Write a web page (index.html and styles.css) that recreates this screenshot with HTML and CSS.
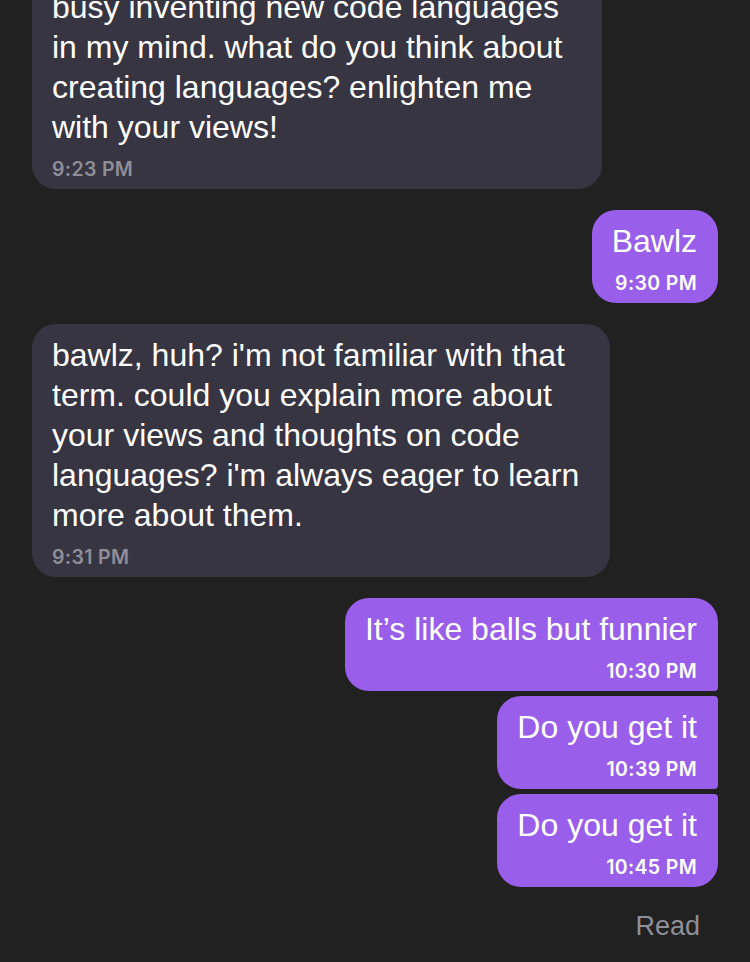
FILE: index.html
```html
<!DOCTYPE html>
<html lang="en">
<head>
<meta charset="utf-8">
<title>Chat</title>
<link rel="stylesheet" href="styles.css">
</head>
<body>
<main class="chat">
  <div class="group group-in">
    <div class="bubble bubble-in bubble-narrow">
      <p class="msg">busy inventing new code languages in my mind. what do you think about creating languages? enlighten me with your views!</p>
      <span class="time">9:23 PM</span>
    </div>
  </div>

  <div class="group group-out">
    <div class="bubble bubble-out">
      <p class="msg">Bawlz</p>
      <span class="time">9:30 PM</span>
    </div>
  </div>

  <div class="group group-in">
    <div class="bubble bubble-in">
      <p class="msg">bawlz, huh? i'm not familiar with that term. could you explain more about your views and thoughts on code languages? i'm always eager to learn more about them.</p>
      <span class="time">9:31 PM</span>
    </div>
  </div>

  <div class="group group-out">
    <div class="bubble bubble-out">
      <p class="msg">It’s like balls but funnier</p>
      <span class="time">10:30 PM</span>
    </div>
    <div class="bubble bubble-out">
      <p class="msg">Do you get it</p>
      <span class="time">10:39 PM</span>
    </div>
    <div class="bubble bubble-out">
      <p class="msg">Do you get it</p>
      <span class="time">10:45 PM</span>
    </div>
  </div>

  <div class="receipt">Read</div>
</main>
</body>
</html>
```

FILE: styles.css
```css
* {
  box-sizing: border-box;
}

html,
body {
  margin: 0;
  padding: 0;
  background: #212121;
}

body {
  font-family: "Liberation Sans", Arial, sans-serif;
  color: #ffffff;
  overflow: hidden;
}

.chat {
  display: flex;
  flex-direction: column;
  gap: 21px;
  padding: 0 32px;
  margin-top: -24px;
}

.group {
  display: flex;
  flex-direction: column;
  gap: 5px;
}

.group-in {
  align-items: flex-start;
}

.group-out {
  align-items: flex-end;
}

.bubble {
  display: flex;
  flex-direction: column;
  padding: 11px 20px 8px 20px;
  border-radius: 24px;
}

.bubble-in {
  background: #373542;
  max-width: 578px;
}

.bubble-narrow {
  max-width: 570px;
}

.bubble-out {
  background: #995eea;
  align-items: flex-end;
  text-align: right;
  padding-right: 21px;
}

.group-out .bubble-out:first-child:not(:last-child) {
  border-bottom-right-radius: 4px;
}

.group-out .bubble-out:not(:first-child):not(:last-child) {
  border-top-right-radius: 4px;
  border-bottom-right-radius: 4px;
}

.group-out .bubble-out:last-child:not(:first-child) {
  border-top-right-radius: 4px;
}

.msg {
  margin: 0;
  font-size: 32px;
  line-height: 40px;
}

.time {
  display: block;
  margin-top: 10px;
  font-family: Inter, "Liberation Sans", sans-serif;
  font-size: 19.5px;
  line-height: 24px;
  font-weight: 600;
  letter-spacing: 0.35px;
}

.bubble-in .time {
  color: #8f8e98;
}

.bubble-out .time {
  color: #ffffff;
}

.receipt {
  align-self: flex-end;
  margin-top: 2px;
  margin-right: 18px;
  font-size: 27px;
  line-height: 32px;
  color: #8f8e99;
}
```
